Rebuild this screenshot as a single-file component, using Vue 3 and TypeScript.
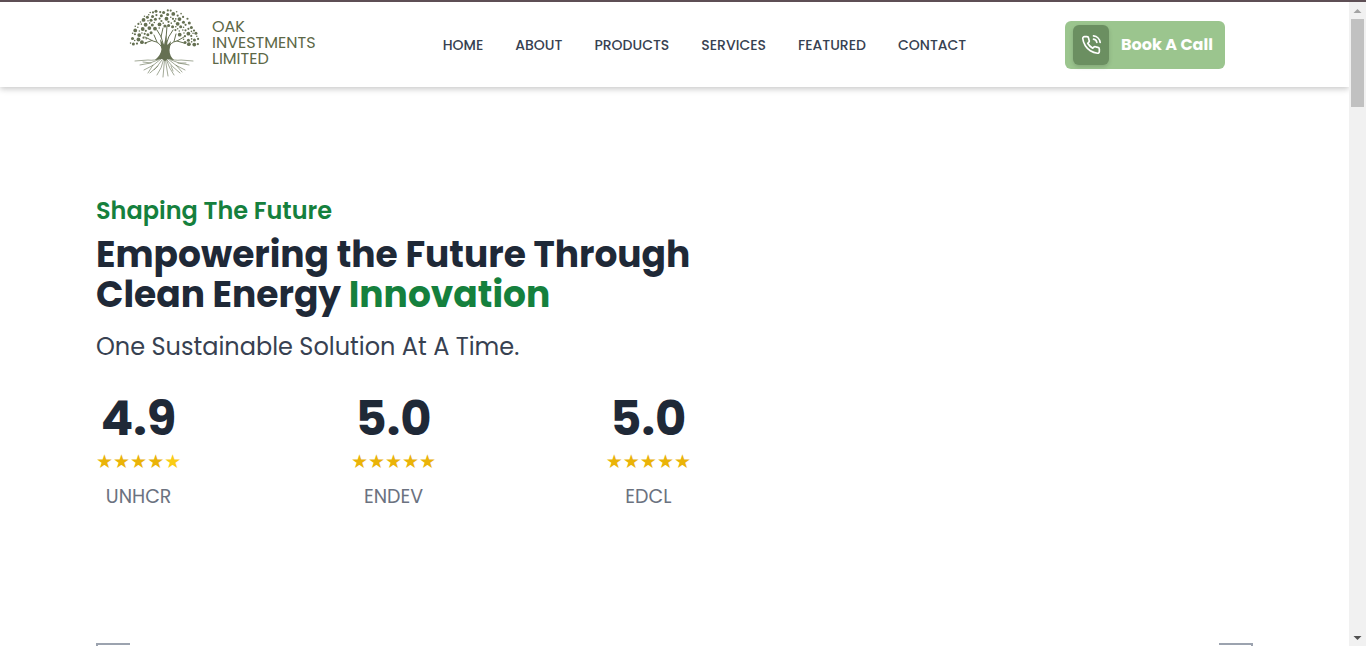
<script setup lang="ts">
interface Dot { x: number; y: number; r: number }
interface Rating { score: string; label: string; full: number }

const links: string[] = ['HOME', 'ABOUT', 'PRODUCTS', 'SERVICES', 'FEATURED', 'CONTACT']

const ratings: Rating[] = [
  { score: '4.9', label: 'UNHCR', full: 4 },
  { score: '5.0', label: 'ENDEV', full: 5 },
  { score: '5.0', label: 'EDCL', full: 5 },
]

// Leaves are scattered over a dome from a fixed seed, so the logo is the same on every load.
const leaves: Dot[] = []
let seed = 41
const random = (): number => {
  seed = (seed * 16807) % 2147483647
  return seed / 2147483647
}
const scatter = (r: number, tries: number): void => {
  for (let i = 0; i < tries; i++) {
    const dx = (random() * 2 - 1) * 34
    const dy = -random() * 35 + 1.5
    const distance = Math.hypot(dx, dy)
    if (distance > 35 - r || distance < 16) continue
    if (dy > -8 && Math.abs(dx) < 18) continue
    const x = 36.5 + dx
    const y = 35.5 + dy
    if (leaves.some((leaf) => Math.hypot(leaf.x - x, leaf.y - y) < leaf.r + r + 0.6)) continue
    leaves.push({ x, y, r })
  }
}
scatter(1.9, 40)
scatter(1.5, 120)
scatter(1.1, 600)
scatter(0.8, 1200)
</script>

<template>
  <div class="window">
    <div class="page">
      <header class="header">
        <a class="brand" href="#">
          <svg class="tree" viewBox="0 0 72 70" aria-hidden="true">
            <circle v-for="(d, i) in leaves" :key="i" :cx="d.x" :cy="d.y" :r="d.r" />
            <path class="trunk" d="M32 31 L36 37 L38 27 L39.500 37 L43 33 L41.500 42 Q41.500 48 46 52 L40 51 L37 53 L34 51 L27 52 Q33 47 33.500 41 Z" />
            <g class="branches">
              <path d="M34.500 41 Q32 34 25 33 L17 29 M29 34 L26 27 M24 32.500 L17 35" />
              <path d="M40 41 Q42 34 49 33 L56 29 M46 33.500 L48 26 M49 33 L56 35" />
              <path d="M35.500 37 Q34 28 29 22 M33 29 L35 20 M38 37 Q40 28 45 22 M38 31 L39 18" />
            </g>
            <g class="roots">
              <path d="M34 50 Q26 53 20 52 L7 53 M30 52 Q22 56 12 57 M33 51 Q26 58 16 62" />
              <path d="M39 50 Q47 53 53 52 L65 53 M43 52 Q51 56 61 57 M40 51 Q47 58 57 62" />
              <path d="M34 52 Q30 59 22 65 M35.500 52 Q34 60 29 67 M36.500 52 L35 69 M37.500 52 Q39 62 40 68 M38.500 52 Q41 60 46 67 M39 52 Q44 59 52 65" />
              <path d="M23 55 L15 54 M25 57 L20 65 M30 58 L26 62 M50 55 L58 55 M48 57 L54 64 M43 58 L45 63" />
            </g>
          </svg>
          <span>OAK<br />INVESTMENTS<br />LIMITED</span>
        </a>
        <nav class="nav">
          <a v-for="link in links" :key="link" href="#">{{ link }}</a>
        </nav>
        <button class="call" type="button">
          <span class="call-icon">
            <svg viewBox="0 0 24 24" aria-hidden="true">
              <path d="M15.050 5A5 5 0 0 1 19 8.950M15.050 1A9 9 0 0 1 23 8.940m-1 7.980v3a2 2 0 0 1-2.180 2 19.790 19.790 0 0 1-8.630-3.070 19.500 19.500 0 0 1-6-6 19.790 19.790 0 0 1-3.070-8.670A2 2 0 0 1 4.110 2h3a2 2 0 0 1 2 1.720 12.840 12.840 0 0 0 .7 2.810 2 2 0 0 1-.45 2.110L8.090 9.910a16 16 0 0 0 6 6l1.270-1.270a2 2 0 0 1 2.110-.45 12.840 12.840 0 0 0 2.810.7A2 2 0 0 1 22 16.920z" />
            </svg>
          </span>
          <span class="call-text">Book A Call</span>
        </button>
      </header>

      <main class="main">
        <section class="hero">
          <p class="eyebrow">Shaping The Future</p>
          <h1>Empowering the Future Through<br />Clean Energy <em>Innovation</em></h1>
          <p class="lead">One Sustainable Solution At A Time.</p>
          <div class="ratings">
            <div v-for="r in ratings" :key="r.label" class="rating">
              <strong>{{ r.score }}</strong>
              <span class="stars"><span v-for="n in 5" :key="n" :class="{ pale: n > r.full }">★</span></span>
              <span class="label">{{ r.label }}</span>
            </div>
          </div>
        </section>
        <section class="frame">
          <span class="corner left"></span>
          <span class="corner right"></span>
        </section>
      </main>
    </div>

    <div class="scrollbar" aria-hidden="true">
      <svg class="up" viewBox="0 0 17 17"><path d="M4.500 11 L8.500 7 L12.500 11 Z" /></svg>
      <div class="thumb"></div>
      <svg class="down" viewBox="0 0 17 17"><path d="M4.500 7 L8.500 11 L12.500 7 Z" /></svg>
    </div>
  </div>
</template>

<style>
body {
  margin: 0;
  background: #fff;
}
</style>

<style scoped>
.window {
  box-sizing: border-box;
  display: grid;
  grid-template-columns: 1fr 17px;
  height: 100vh;
  overflow: hidden;
  border-top: 2px solid #5e4f55;
  font-family: Poppins, Inter, "Open Sans", sans-serif;
  color: #1f2937;
}
.page {
  min-width: 0;
  overflow: hidden;
}
.header {
  display: flex;
  align-items: center;
  justify-content: space-between;
  box-sizing: border-box;
  height: 85px;
  padding: 0 124px 0 128px;
  background: #fff;
  box-shadow: 0 2px 6px rgba(0, 0, 0, 0.22);
}
.brand {
  display: flex;
  align-items: center;
  gap: 12px;
  min-width: 216px;
  padding-bottom: 4px;
  color: #5d6847;
  font-size: 16px;
  font-weight: 400;
  line-height: 16px;
  text-decoration: none;
}
.tree {
  width: 72px;
  height: 70px;
  fill: #657052;
}
.branches,
.roots {
  fill: none;
  stroke: #657052;
  stroke-linecap: round;
}
.branches {
  stroke-width: 1;
}
.roots {
  stroke-width: 0.6;
}
.nav {
  display: flex;
  gap: 32px;
}
.nav a {
  color: #374151;
  font-size: 14px;
  font-weight: 500;
  line-height: 20px;
  text-decoration: none;
}
.call {
  display: flex;
  align-items: center;
  gap: 12px;
  box-sizing: border-box;
  min-width: 160px;
  height: 48px;
  padding: 0 8px;
  border: 0;
  border-radius: 6px;
  background: #9bc58e;
  color: #fff;
  font: inherit;
  font-size: 16px;
  font-weight: 700;
  white-space: nowrap;
}
.call-icon {
  display: grid;
  place-items: center;
  width: 36px;
  height: 40px;
  border-radius: 6px;
  background: #6b8f61;
  box-shadow: 0 2px 4px rgba(0, 0, 0, 0.15);
}
.call-icon svg {
  width: 20px;
  height: 20px;
  fill: none;
  stroke: #fff;
  stroke-width: 2;
  stroke-linecap: round;
  stroke-linejoin: round;
}
.main {
  padding: 108px 96px 0;
}
.hero {
  max-width: 595px;
  white-space: nowrap;
}
p,
h1 {
  margin: 0;
}
.eyebrow {
  color: #15803d;
  font-size: 24px;
  font-weight: 600;
  line-height: 32px;
}
h1 {
  margin-top: 8px;
  font-size: 36px;
  font-weight: 700;
  line-height: 40px;
}
h1 em {
  color: #15803d;
  font-style: normal;
}
.lead {
  margin-top: 16px;
  color: #374151;
  font-size: 24px;
  font-weight: 400;
  line-height: 32px;
}
.ratings {
  display: flex;
  justify-content: space-between;
  margin-top: 32px;
}
.rating {
  display: flex;
  flex-direction: column;
  align-items: center;
}
.rating strong {
  font-size: 48px;
  font-weight: 700;
  line-height: 48px;
}
.stars {
  margin-top: 4px;
  color: #eab308;
  font-family: "DejaVu Sans", sans-serif;
  font-size: 19px;
  line-height: 28px;
}
.pale {
  color: #facc15;
}
.label {
  margin-top: 8px;
  color: #6b7280;
  font-size: 19px;
  line-height: 28px;
}
.frame {
  display: flex;
  justify-content: space-between;
  margin-top: 132px;
}
.corner {
  box-sizing: border-box;
  width: 34px;
  height: 34px;
  border-top: 2px solid #9ca3af;
}
.left {
  border-left: 2px solid #9ca3af;
}
.right {
  border-right: 2px solid #9ca3af;
}
.scrollbar {
  display: flex;
  flex-direction: column;
  background: #f1f1f1;
}
.scrollbar svg {
  width: 17px;
  height: 17px;
}
.up {
  fill: #a3a3a3;
}
.down {
  margin-top: auto;
  fill: #505050;
}
.thumb {
  height: 88px;
  margin: 0 2px;
  background: #c1c1c1;
}
</style>
